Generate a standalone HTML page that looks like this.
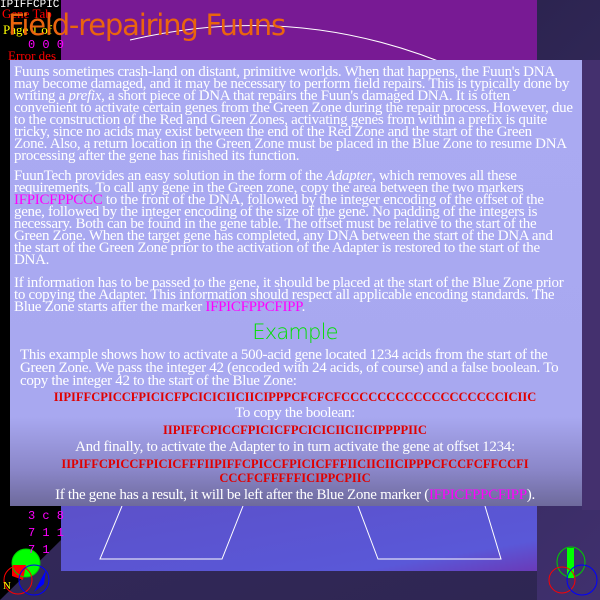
<!DOCTYPE html>
<html><head><style>
body{margin:0;width:600px;height:600px;overflow:hidden;position:relative;background:#322858;font-family:"Liberation Serif",serif}
.a{position:absolute;white-space:nowrap}
.l{position:absolute;left:14px;white-space:nowrap;color:#fff;font-size:15px;line-height:14px;letter-spacing:-0.3px}
.c{left:0;width:590px;text-align:center}
.r{color:#e00000;font-weight:bold;font-size:12.5px;letter-spacing:0}
.m{color:#ff00ff}
</style></head><body>
<div class="a" style="left:0;top:0;width:600px;height:600px;background:linear-gradient(160deg,#3a2c66,#2e2652)"></div>
<div class="a" style="left:60px;top:0;width:477px;height:60px;background:#781a94"></div>
<div class="a" style="left:537px;top:0;width:63px;height:600px;background:linear-gradient(135deg,#2c2450,#40306e)"></div>
<div class="a" style="left:582px;top:60px;width:18px;height:450px;background:#44306e"></div>
<div class="a" style="left:61px;top:500px;width:476px;height:71px;background:linear-gradient(170deg,#5c50c8,#5a58d8 80%,#6a3ab8)"></div>
<div class="a" style="left:0;top:0;width:61px;height:540px;background:#000"></div>
<svg class="a" style="left:0;top:0" width="600" height="600">
<polygon points="0,530 61,530 61,540 0,600" fill="#000"/>
<path d="M130,40 Q300,0 460,70" stroke="#fff" fill="none" stroke-width="1"/>
<path d="M122,506 L100,559 L222,559 L243,506 M358,506 L378,559 L501,559 L485,506" stroke="#fff" fill="none"/>
<circle cx="26" cy="563" r="14" fill="#00ff00"/><path d="M12,565 L26,565 L23,580 L12,576Z" fill="#f00"/><path d="M46,570 L34,592 L44,584Z" fill="#00f"/>
<circle cx="26" cy="563" r="14" fill="none" stroke="#0c0"/><circle cx="18" cy="580" r="14" fill="none" stroke="#f00"/><circle cx="34" cy="580" r="15" fill="none" stroke="#00f"/>
<ellipse cx="571" cy="562" rx="14" ry="15" fill="none" stroke="#0c0"/><rect x="567" y="548" width="7" height="30" fill="#0f0"/>
<circle cx="562" cy="580" r="13" fill="none" stroke="#f00"/><circle cx="582" cy="580" r="15" fill="none" stroke="#00f"/>
</svg>
<div class="a" style="left:10px;top:60px;width:572px;height:446px;background:linear-gradient(180deg,#aaaaf2 0%,#a8a8f0 80%,#8a86c8 92%,#6e6a9c 100%)"></div>
<div class="a" style="left:0;top:0;color:#fff;font-family:'Liberation Mono',monospace;font-size:11px;line-height:10px">IPIFFCPIC</div>
<div class="a" style="left:2px;top:6px;color:#f00;font-size:13px">Gene Tab</div>
<div class="a" style="left:3px;top:22px;color:#ff0;font-size:13px">Page 1 of</div>
<div class="a" style="left:28px;top:38px;color:#f0f;font-family:'Liberation Mono',monospace;font-size:12px">0 0 0</div>
<div class="a" style="left:8px;top:48px;color:#f00;font-size:13px">Error des</div>
<div class="a" style="left:8px;top:8px;color:#ea640e;font-family:'DejaVu Sans',sans-serif;font-size:29px;letter-spacing:-1.2px;line-height:34px">Field-repairing Fuuns</div>
<div class="a" style="left:28px;top:508px;color:#f0f;font-family:'Liberation Mono',monospace;font-size:12px;line-height:17px">3 c 8<br>7 1 1<br>7 1</div>
<div class="a" style="left:3px;top:580px;color:#ff0;font-size:11px">N</div>

<div class="l" style="top:65px">Fuuns sometimes crash-land on distant, primitive worlds. When that happens, the Fuun's DNA</div>
<div class="l" style="top:77px">may become damaged, and it may be necessary to perform field repairs. This is typically done by</div>
<div class="l" style="top:89px">writing a <i>prefix</i>, a short piece of DNA that repairs the Fuun's damaged DNA.  It is often</div>
<div class="l" style="top:101px">convenient to activate certain genes from the Green Zone during the repair process. However, due</div>
<div class="l" style="top:113px">to the construction of the Red and Green Zones, activating genes from within a prefix is quite</div>
<div class="l" style="top:125px">tricky, since no acids may exist between the end of the Red Zone and the start of the Green</div>
<div class="l" style="top:137px">Zone.  Also, a return location in the Green Zone must be placed in the Blue Zone to resume DNA</div>
<div class="l" style="top:149px">processing after the gene has finished its function.</div>

<div class="l" style="top:169px">FuunTech provides an easy solution in the form of the <i>Adapter</i>, which removes all these</div>
<div class="l" style="top:181px">requirements. To call any gene in the Green zone, copy the area between the two markers</div>
<div class="l" style="top:193px"><span class="m">IFPICFPPCCC</span> to the front of the DNA, followed by the integer encoding of the offset of the</div>
<div class="l" style="top:205px">gene, followed by the integer encoding of the size of the gene.  No padding of the integers is</div>
<div class="l" style="top:217px">necessary.  Both can be found in the gene table. The offset must be relative to the start of the</div>
<div class="l" style="top:229px">Green Zone.  When the target gene has completed, any DNA between the start of the DNA and</div>
<div class="l" style="top:241px">the start of the Green Zone prior to the activation of the Adapter is restored to the start of the</div>
<div class="l" style="top:253px">DNA.</div>

<div class="l" style="top:276px">If information has to be passed to the gene, it should be placed at the start of the Blue Zone prior</div>
<div class="l" style="top:288px">to copying the Adapter.  This information should respect all applicable encoding standards.  The</div>
<div class="l" style="top:300px">Blue Zone starts after the marker <span class="m">IFPICFPPCFIPP</span>.</div>

<div class="l c" style="top:320px;color:#00e000;font-family:'DejaVu Sans',sans-serif;font-weight:200;font-size:21px;line-height:24px;letter-spacing:-0.8px">Example</div>

<div class="l" style="left:20px;top:348px">This example shows how to activate a 500-acid gene located 1234 acids from the start of the</div>
<div class="l" style="left:20px;top:361px">Green Zone.  We pass the integer 42 (encoded with 24 acids, of course) and a false boolean.  To</div>
<div class="l" style="left:20px;top:374px">copy the integer 42 to the start of the Blue Zone:</div>
<div class="l c r" style="top:390px">IIPIFFCPICCFPICICFPCICICIICIICIPPPCFCFCFCCCCCCCCCCCCCCCCCCICIIC</div>
<div class="l c" style="top:406px">To copy the boolean:</div>
<div class="l c r" style="top:423px">IIPIFFCPICCFPICICFPCICICIICIICIPPPPIIC</div>
<div class="l c" style="top:440px">And finally, to activate the Adapter to in turn activate the gene at offset 1234:</div>
<div class="l c r" style="top:457px">IIPIFFCPICCFPICICFFFIIPIFFCPICCFPICICFFFIICIICIICIPPPCFCCFCFFCCFI</div>
<div class="l c r" style="top:471px">CCCFCFFFFFICIPPCPIIC</div>
<div class="l c" style="top:488px">If the gene has a result, it will be left after the Blue Zone marker (<span class="m">IFPICFPPCFIPP</span>).</div>
</body></html>
